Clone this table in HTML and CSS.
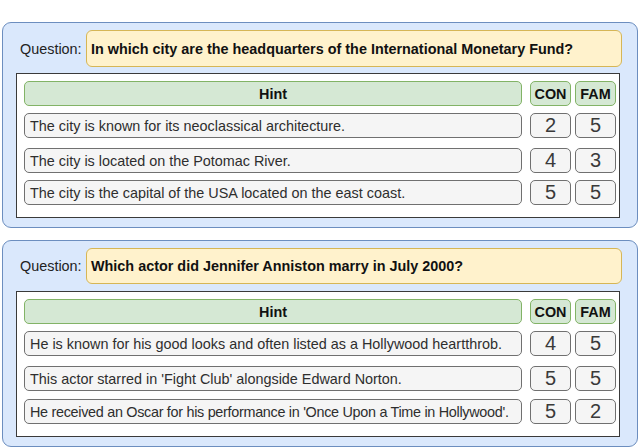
FILE: index.html
```html
<!DOCTYPE html>
<html>
<head>
<meta charset="utf-8">
<link rel="stylesheet" href="styles.css">
</head>
<body>
<div class="page">
  <section class="card card-first">
    <div class="question">
      <span class="qlabel">Question:</span>
      <div class="qbox">In which city are the headquarters of the International Monetary Fund?</div>
    </div>
    <div class="table">
      <div class="row">
        <div class="hint head">Hint</div>
        <div class="num head">CON</div>
        <div class="num head">FAM</div>
      </div>
      <div class="row r1">
        <div class="hint">The city is known for its neoclassical architecture.</div>
        <div class="num">2</div>
        <div class="num">5</div>
      </div>
      <div class="row r2">
        <div class="hint">The city is located on the Potomac River.</div>
        <div class="num">4</div>
        <div class="num">3</div>
      </div>
      <div class="row r3">
        <div class="hint">The city is the capital of the USA located on the east coast.</div>
        <div class="num">5</div>
        <div class="num">5</div>
      </div>
    </div>
  </section>
  <section class="card card-second">
    <div class="question">
      <span class="qlabel">Question:</span>
      <div class="qbox">Which actor did Jennifer Anniston marry in July 2000?</div>
    </div>
    <div class="table">
      <div class="row">
        <div class="hint head">Hint</div>
        <div class="num head">CON</div>
        <div class="num head">FAM</div>
      </div>
      <div class="row r1">
        <div class="hint">He is known for his good looks and often listed as a Hollywood heartthrob.</div>
        <div class="num">4</div>
        <div class="num">5</div>
      </div>
      <div class="row r2">
        <div class="hint">This actor starred in 'Fight Club' alongside Edward Norton.</div>
        <div class="num">5</div>
        <div class="num">5</div>
      </div>
      <div class="row r3">
        <div class="hint hint-tight">He received an Oscar for his performance in 'Once Upon a Time in Hollywood'.</div>
        <div class="num">5</div>
        <div class="num">2</div>
      </div>
    </div>
  </section>
</div>
</body>
</html>
```

FILE: styles.css
```css
html, body {
  margin: 0;
  padding: 0;
  background: #ffffff;
}
body {
  width: 640px;
  height: 448px;
  overflow: hidden;
  font-family: "Liberation Sans", Arial, sans-serif;
  color: #1a1a1a;
}
.page {
  padding: 22px 2px 0 2px;
  display: flex;
  flex-direction: column;
  gap: 12px;
}
.card {
  box-sizing: border-box;
  width: 636px;
  background: #dae8fc;
  border: 1px solid #6c8ebf;
  border-radius: 9px;
  padding: 7px 17px 9px 13px;
  display: flex;
  flex-direction: column;
  gap: 6px;
}
.card-first { height: 206px; }
.card-second { height: 207px; gap: 7px; }
.question {
  display: flex;
  align-items: center;
  margin-right: -2px;
}
.qlabel {
  font-size: 14.4px;
  color: #222;
  padding-left: 4px;
  width: 70px;
  box-sizing: border-box;
  flex: none;
}
.qbox {
  flex: 1;
  box-sizing: border-box;
  height: 37px;
  background: #fff2cc;
  border: 1px solid #d6b656;
  border-radius: 6px;
  padding: 0 4px;
  display: flex;
  align-items: center;
  font-size: 14.4px;
  font-weight: bold;
  color: #111;
}
.card-second .qbox { height: 36px; }
.table {
  flex: 1;
  background: #ffffff;
  border: 1.5px solid #3a3a3a;
  padding: 7px 3px 0 7px;
  display: flex;
  flex-direction: column;
}
.row {
  display: flex;
  height: 25px;
}
.r1 { margin-top: 7px; }
.r2 { margin-top: 10px; }
.r3 { margin-top: 7px; }
.card-second .r2 { margin-top: 10px; }
.card-second .r3 { margin-top: 8px; }
.hint {
  box-sizing: border-box;
  width: 498px;
  margin-right: 8px;
  background: #f5f5f5;
  border: 1px solid #707070;
  border-radius: 5px;
  padding: 0 5px;
  display: flex;
  align-items: center;
  font-size: 14.4px;
  color: #2e2e2e;
  white-space: nowrap;
  overflow: hidden;
}
.hint-tight { letter-spacing: -0.3px; }
.num {
  box-sizing: border-box;
  width: 41px;
  margin-right: 4px;
  background: #f5f5f5;
  border: 1px solid #707070;
  border-radius: 5px;
  display: flex;
  align-items: center;
  justify-content: center;
  font-size: 20px;
  color: #3a3a3a;
}
.num:last-child { margin-right: 0; }
.head {
  background: #d5e8d4;
  border-color: #82b366;
  font-weight: bold;
  font-size: 14.4px;
  color: #111;
  justify-content: center;
}
.num.head { font-size: 14.4px; }
```
